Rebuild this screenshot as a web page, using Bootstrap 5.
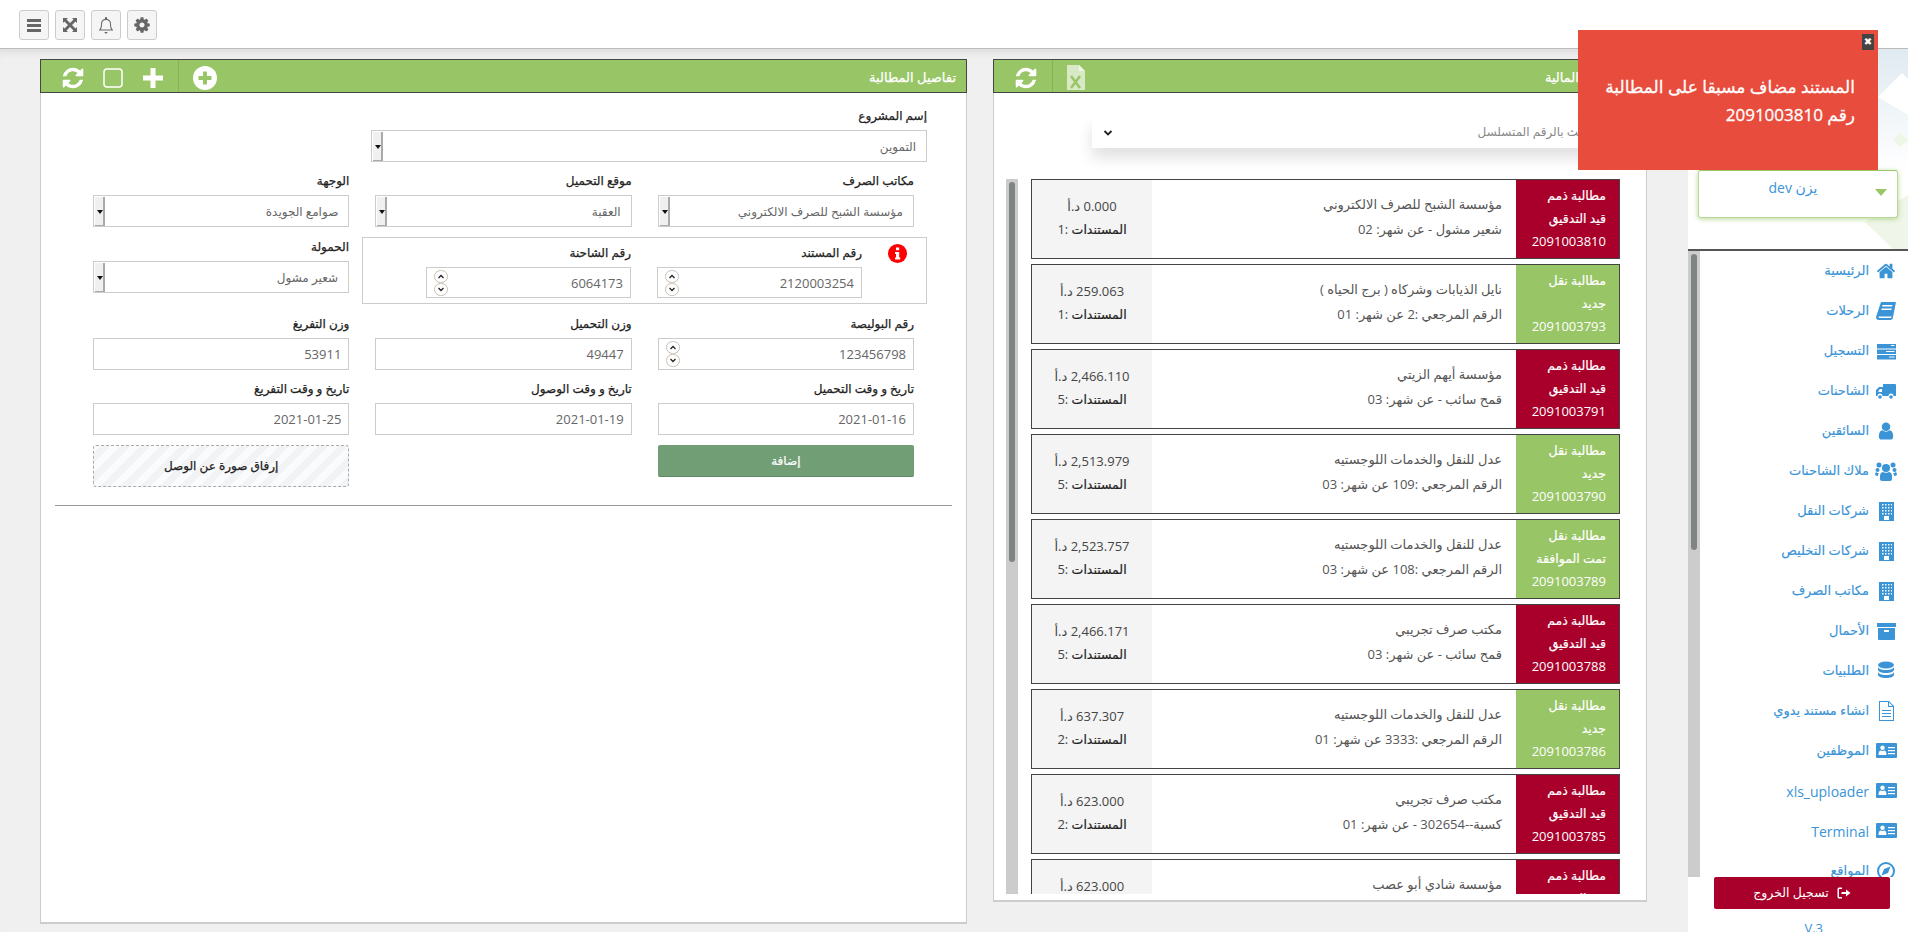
<!DOCTYPE html>
<html lang="ar" dir="rtl">
<head>
    <meta charset="UTF-8">
    <meta name="viewport" content="width=device-width, initial-scale=1.0">
    <title>المطالبات</title>
    <link href="https://cdn.jsdelivr.net/npm/bootstrap@5.3.0/dist/css/bootstrap.min.css" rel="stylesheet">
    <style>
        html, body {
            height: 932px;
            overflow: hidden;
        }
        body {
            background: #fff;
            font-family: "Open Sans", "DejaVu Sans", sans-serif;
            font-size: 13px;
            color: #555;
        }
        /* top bar */
        .top-strip {
            height: 49px;
            margin-right: 12px;
            padding: 10px 19px 0;
            gap: 6px;
            border-bottom: 1px solid #bbb;
        }
        .tool-btn {
            width: 30px;
            height: 30px;
            padding: 0;
            border: 1px solid #ccc;
            border-radius: 3px;
            background: #f5f5f5;
            color: #666;
        }
        .tool-btn svg { width: 18px; height: 18px; fill: currentColor; }
        .shell { height: 883px; }

        /* main area */
        .work-area {
            width: 1688px;
            height: 883px;
            padding: 10px 41px 0 40px;
            gap: 26px;
            background: #f0f0f0;
            box-shadow: inset 0 9px 8px -6px rgba(0, 0, 0, .09);
        }
        .claims-panel {
            width: 654px;
            height: 843px;
            flex: none;
        }
        .detail-panel {
            width: 927px;
            height: 865px;
            flex: none;
        }
        .claims-panel, .detail-panel {
            background: #fff;
            border: solid #ccc;
            border-width: 0 1px 2px;
        }
        .panel-head {
            height: 34px;
            margin: 0 -1px;
            padding: 3px 10px 0 19.500px;
            background: #98c566;
            border: 1px solid #444;
            color: #fff;
            font-size: 13px;
            -webkit-text-stroke: .25px #fff;
        }
        .panel-head svg { fill: #fff; display: block; flex: none; }
        .head-sep { width: 1px; height: 32px; margin-top: -3px; background: #87b256; flex: none; }
        .gap-14 { margin-left: 14px; }
        .gap-15 { margin-left: 15px; }
        .gap-18 { margin-left: 18.500px; }
        .gap-20 { margin-left: 20px; }

        /* detail form */
        .form-body { padding: 14px 52px 0; }
        .form-cols {
            display: grid;
            grid-template-columns: repeat(3, 1fr);
            column-gap: 26px;
            margin-bottom: 10px;
        }
        .field-label {
            display: block;
            height: 23px;
            line-height: 17px;
            margin: 0;
            font-size: 12px;
            color: #222;
            -webkit-text-stroke: .25px #222;
        }
        .field-input {
            width: 100%;
            height: 32px;
            padding: 0 7px;
            border: 1px solid #ccc;
            border-radius: 0;
            background-color: #fff;
            color: #666;
            font-size: 13px;
            text-align: right;
            outline: 0;
        }
        select.field-input {
            appearance: none;
            padding: 2px 10px 0;
            font-size: 12px;
            background-repeat: no-repeat;
            background-position: left 1px top 1px;
            background-image: url("data:image/svg+xml,%3Csvg xmlns='http://www.w3.org/2000/svg' width='10' height='30'%3E%3Crect width='10' height='30' fill='%23f0f0f0'/%3E%3Crect x='8' width='2' height='30' fill='%23aaa'/%3E%3Crect y='28' width='10' height='2' fill='%23aaa'/%3E%3Cpath d='M2 13h6l-3 4z' fill='%23111'/%3E%3C/svg%3E");
        }
        .spin-input {
            background-repeat: no-repeat;
            background-position: left 7px center;
            background-image: url("data:image/svg+xml,%3Csvg xmlns='http://www.w3.org/2000/svg' width='14' height='26'%3E%3Crect x='.5' y='.5' width='13' height='12' rx='6' fill='%23fff' stroke='%23c9bfb2'/%3E%3Crect x='.5' y='13.500' width='13' height='12' rx='6' fill='%23fff' stroke='%23c9bfb2'/%3E%3Cpath d='M4.500 8l2.500-2.500L9.500 8M4.500 18l2.500 2.500L9.500 18' fill='none' stroke='%23222' stroke-width='1.300'/%3E%3C/svg%3E");
        }
        .project-row { width: 556px; margin: 0 -13px 10px 0; }
        .mixed-row { gap: 13px; margin: 0 -13px 11px 0; }
        .doc-box {
            width: 565px;
            height: 67px;
            padding: 6px 19px 0 9px;
            border: 1px solid #ccc;
        }
        .doc-box .doc-col { width: 205px; }
        .doc-box .doc-col + .doc-col { margin-right: 26px; }
        .doc-box .field-input { height: 31px; }
        .alert-dot { width: 19px; height: 19px; margin-left: 26px; flex: none; }
        .weight-col { width: 256px; padding-top: 1px; }
        .add-btn {
            height: 32px;
            padding: 0;
            border: 0;
            border-bottom: 1px solid #5f8b63;
            border-radius: 2px;
            background: #719e74;
            color: #fff;
            font-size: 12px;
            -webkit-text-stroke: .2px #fff;
        }
        .upload-zone {
            height: 42px;
            border: 1px dashed #aaa;
            border-radius: 3px;
            background: repeating-linear-gradient(-45deg, #f2f3f5 0 7px, #fafbfc 7px 14px);
            color: #222;
            font-size: 12px;
            -webkit-text-stroke: .25px #222;
        }
        .form-rule { margin: 18px 14px 0; border-color: #999; opacity: 1; }

        /* claims */
        .search-bar {
            width: 517px;
            height: 32px;
            margin: 23px 37px 0 0;
            box-shadow: 0 10px 15px rgba(0, 0, 0, .12);
            background: #fff;
        }
        .search-bar input {
            border: 0;
            outline: 0;
            flex: 1;
            min-width: 0;
            padding: 0 16px;
            font-size: 12px;
            color: #777;
            background: transparent;
        }
        .search-bar input::placeholder { color: #888; }
        .search-drop { width: 32px; height: 32px; padding: 0; border: 0; background: #fff; }
        .list-wrap { height: 715px; margin-top: 31px; overflow: hidden; }
        .list-track {
            width: 12px;
            margin: 0 13px 0 0;
            padding: 3px;
            background: #ccc;
            flex: none;
        }
        .list-thumb { height: 380px; background: #808484; border-radius: 3px; }
        .claim-stack { width: 589px; margin-right: 26px; flex: none; }
        .claim-row {
            height: 80px;
            margin-bottom: 5px;
            border: 1px solid #444;
        }
        .claim-state {
            width: 103px;
            padding: 4px 13px 0 0;
            color: #fff;
            font-size: 12.500px;
            line-height: 23px;
            flex: none;
        }
        .claim-state b { display: block; font-weight: 400; -webkit-text-stroke: .2px #fff; }
        .claim-state span { display: block; font-size: 13px; }
        .state-red { background: #a8002a; }
        .state-green { background: #98c566; }
        .claim-info {
            flex: 1;
            padding: 12px 14px 0 0;
            color: #555;
            line-height: 25px;
        }
        .claim-money {
            width: 120px;
            padding-top: 15px;
            background: #f4f4f4;
            color: #444;
            text-align: center;
            line-height: 23px;
            flex: none;
        }
        .claim-money b { font-weight: 400; font-size: 12.500px; color: #222; -webkit-text-stroke: .2px #222; }

        /* sidebar */
        .side-col { width: 232px; flex: none; background: #fff; }
        .side-top {
            height: 202px;
            width: 220px;
            margin-right: 12px;
            padding: 121px 10px 0;
            border-bottom: 2px solid #555;
            flex: none;
            background:
                url("data:image/svg+xml,%3Csvg xmlns='http://www.w3.org/2000/svg' width='220' height='200'%3E%3Cpath d='M190 48l24-24 6 6v36z' fill='%23fff'/%3E%3Cpath d='M212 84l8 7-8 7-7-7z' fill='%23eef6e6'/%3E%3Cpath d='M177 173l43-27v54h-15z' fill='%23eff6e9'/%3E%3Cpath d='M178 200l9-9 9 9z' fill='%23fff'/%3E%3C/svg%3E") no-repeat,
                linear-gradient(#dfeaf1, #fff 60%);
        }
        .user-box {
            height: 48px;
            padding: 6px 10px 0 0;
            background: #fff;
            border: 1px solid #b9d99a;
            border-top-color: #98c566;
            border-radius: 3px;
            box-shadow: 0 1px 5px rgba(152, 197, 102, .7);
            color: #3a94d6;
            font-size: 14px;
            text-align: center;
        }
        .user-caret {
            position: absolute;
            top: 18px;
            right: 10px;
            border: 6px solid transparent;
            border-top: 7px solid #98c566;
            border-bottom: 0;
        }
        .side-list { height: 626px; flex: none; overflow: hidden; }
        .side-track {
            width: 12px;
            padding: 3px;
            background: #ccc;
            flex: none;
            order: 2;
        }
        .side-thumb { width: 6px; height: 296px; background: #808484; border-radius: 3px; }
        .side-menu { flex: 1; padding: 0 23px 0 0; }
        .side-link {
            height: 40px;
            padding: 0;
            gap: 6px;
            color: #3a94d6;
            font-size: 13px;
            flex: none;
            -webkit-text-stroke: .15px #3a94d6;
        }
        .side-link svg { width: 22px; height: 20px; fill: #3a94d6; flex: none; }
        .latin-name { font-size: 14px; -webkit-text-stroke: 0; }
        .side-foot { text-align: right; }
        .logout-btn {
            width: 176px;
            height: 32px;
            padding: 0;
            border: 0;
            border-radius: 2px;
            background: #a8002a;
            color: #fff;
            font-size: 12.500px;
            margin-right: 30px;
        }
        .version-tag { margin: 10px 97px 0 0; color: #3a94d6; font-size: 13px; }

        /* toast */
        .error-toast {
            position: fixed;
            top: 30px;
            left: 1578px;
            width: 300px;
            height: 140px;
            padding: 43px 23px 0 10px;
            background: #e74c3c;
            color: #fff;
            font-size: 17px;
            line-height: 28px;
            -webkit-text-stroke: .3px #fff;
            z-index: 10;
        }
        .toast-close {
            position: absolute;
            top: 4px;
            right: 4px;
            width: 12px;
            height: 16px;
            background: #444;
            color: #fff;
            font-size: 10px;
            line-height: 15px;
            text-align: center;
            -webkit-text-stroke: 0;
        }
    </style>
</head>
<body>
    <svg width="0" height="0" class="position-absolute">
        <symbol id="ic-refresh" viewBox="0 0 1792 1792"><path d="M1639 1056q0 5-1 7-64 268-268 434.500t-478 166.500q-146 0-282.500-55t-243.500-157l-129 129q-19 19-45 19t-45-19-19-45v-448q0-26 19-45t45-19h448q26 0 45 19t19 45-19 45l-137 137q71 66 161 102t187 36q134 0 250-65t186-179q11-17 53-117 8-23 30-23h192q13 0 22.500 9.500t9.500 22.500zm25-800v448q0 26-19 45t-45 19h-448q-26 0-45-19t-19-45 19-45l138-138q-148-137-349-137-134 0-250 65t-186 179q-11 17-53 117-8 23-30 23h-199q-13 0-22.500-9.500t-9.500-22.500v-7q65-268 270-434.500t480-166.500q146 0 284 55.500t245 156.500l130-129q19-19 45-19t45 19 19 45z"/></symbol>
        <symbol id="ic-home" viewBox="0 0 1792 1792"><path d="M1472 992v480q0 26-19 45t-45 19h-384v-384h-256v384h-384q-26 0-45-19t-19-45v-480q0-1 .5-3t.5-3l575-474 575 474q1 2 1 6zm223-69l-62 74q-8 9-21 11h-3q-13 0-21-7l-692-577-692 577q-12 8-24 7-13-2-21-11l-62-74q-8-10-7-23.500t11-21.500l719-599q32-26 76-26t76 26l244 204v-195q0-14 9-23t23-9h192q14 0 23 9t9 23v408l219 182q10 8 11 21.500t-7 23.500z"/></symbol>
        <symbol id="ic-user" viewBox="0 0 1792 1792"><path d="M1536 1399q0 109-62.500 187t-150.500 78h-854q-88 0-150.500-78t-62.500-187q0-85 8.500-160.500t31.500-152 58.500-131 94-89 134.500-34.500q131 128 313 128t313-128q76 0 134.500 34.500t94 89 58.500 131 31.500 152 8.500 160.500zm-256-887q0 159-112.500 271.500t-271.500 112.500-271.500-112.500-112.500-271.500 112.500-271.500 271.500-112.500 271.500 112.500 112.500 271.500z"/></symbol>
        <symbol id="ic-book" viewBox="0 0 22 20"><path d="M6 1h15l-3 15a3 3 0 0 1-3 3H4a3 3 0 0 1-3-3zm1.500 3l-.4 1.500h10l.4-1.500zm-.8 3.500l-.4 1.500h10l.4-1.500zM3.500 15.500c0 1 .6 1.500 1.500 1.500h10.500c.8 0 1-.6 1.200-1.500z"/></symbol>
        <symbol id="ic-tasks" viewBox="0 0 22 20" fill-rule="evenodd"><path d="M2 3h19v4.500H2zm14 1v1h3.500V4zM2 8.500h19V13H2zM11 10v1h8.500v-1zM2 14h19v4.500H2zm12 1.500v1h5.500v-1z"/></symbol>
        <symbol id="ic-truck" viewBox="0 0 22 20"><path d="M8 3h12a1 1 0 0 1 1 1v11h-2.500a2.500 2.500 0 0 0-5 0H7.500a2.500 2.500 0 0 0-5 0H1V9l3-3h4zM3.500 9.500v1.500H7V8H5z"/><circle cx="5" cy="16" r="1.800"/><circle cx="16" cy="16" r="1.800"/></symbol>
        <symbol id="ic-users" viewBox="0 0 22 20"><circle cx="11" cy="7" r="4"/><circle cx="4" cy="4" r="2.500"/><circle cx="18" cy="4" r="2.500"/><circle cx="2.500" cy="9" r="2"/><circle cx="19.500" cy="9" r="2"/><path d="M5 15c0-3 2-4 3-4 1 1 5 1 6 0 1 0 3 1 3 4v3a2 2 0 0 1-2 2H7a2 2 0 0 1-2-2zM1 11c1 1 2 1 3 1-1 1-1 2-1 3-2 0-3-1-3-2zm20 0c-1 1-2 1-3 1 1 1 1 2 1 3 2 0 3-1 3-2z"/></symbol>
        <symbol id="ic-office" viewBox="0 0 22 20" fill-rule="evenodd"><path d="M4 1h15v19H4zM7 3v1.500h1.500V3zm3 0v1.500h1.500V3zm3 0v1.500h1.500V3zm3 0v1.500h1V3zM7 6v1.500h1.500V6zm3 0v1.500h1.500V6zm3 0v1.500h1.500V6zm3 0v1.500h1V6zM7 9v1.500h1.500V9zm3 0v1.500h1.500V9zm3 0v1.500h1.500V9zm3 0v1.500h1V9zM7 12v1.500h1.500V12zm3 0v1.500h1.500V12zm3 0v1.500h1.500V12zm3 0v1.500h1V12zM9 15v4h5v-4z"/></symbol>
        <symbol id="ic-archive" viewBox="0 0 22 20" fill-rule="evenodd"><path d="M2 2h19v4H2zM3 7h17v11a1 1 0 0 1-1 1H4a1 1 0 0 1-1-1zm6 2v2h5V9z"/></symbol>
        <symbol id="ic-db" viewBox="0 0 22 20"><ellipse cx="11" cy="4" rx="8" ry="3.500"/><path d="M3 6c1 2 3 3 8 3s7-1 8-3v3c-1 2-3 3-8 3S4 11 3 9zm0 5c1 2 3 3 8 3s7-1 8-3v3c-1 2-3 3-8 3s-7-1-8-3z"/></symbol>
        <symbol id="ic-file" viewBox="0 0 22 20" fill-rule="evenodd"><path d="M4 0h10l5 5v15H4zm1 1v18h13V6h-5V1zm9 .500V5h3.500zM7 9h9v1H7zm0 3h9v1H7zm0 3h9v1H7z"/></symbol>
        <symbol id="ic-card" viewBox="0 0 22 20" fill-rule="evenodd"><path d="M2 2h19a1 1 0 0 1 1 1v13a1 1 0 0 1-1 1H2a1 1 0 0 1-1-1V3a1 1 0 0 1 1-1zm5.500 2.500a2.200 2.200 0 1 0 0 4.400 2.200 2.200 0 0 0 0-4.400zM3.500 14h8c0-3-1-4.500-2-4.500-1 .6-3 .6-4 0-1 0-2 1.500-2 4.500zM13 6v1.300h7V6zm0 3v1.300h7V9zm0 3v1.300h7V12z"/></symbol>
        <symbol id="ic-compass" viewBox="0 0 22 20" fill-rule="evenodd"><path d="M11 1a9 9 0 1 1 0 18 9 9 0 0 1 0-18zm0 2a7 7 0 1 0 0 14 7 7 0 0 0 0-14zm4.500 2.500L13 12l-6.500 2.500L9 8z"/></symbol>
    </svg>

    <!-- الشريط العلوي -->
    <div class="top-strip d-flex" dir="ltr">
        <button class="tool-btn d-flex align-items-center justify-content-center" type="button">
            <svg viewBox="0 0 18 18"><path d="M2 3h14v3H2zm0 5h14v3H2zm0 5h14v3H2z"/></svg>
        </button>
        <button class="tool-btn d-flex align-items-center justify-content-center" type="button">
            <svg viewBox="0 0 18 18"><path d="M2 2h5L5.500 3.500 9 7l3.500-3.500L11 2h5v5l-1.500-1.500L11 9l3.500 3.500L16 11v5h-5l1.500-1.500L9 11l-3.500 3.500L7 16H2v-5l1.500 1.500L7 9 3.500 5.500 2 7z"/></svg>
        </button>
        <button class="tool-btn d-flex align-items-center justify-content-center" type="button">
            <svg viewBox="0 0 18 18"><path d="M9 1c.6 0 1 .4 1 1v.8c2.600.5 4 2.500 4 5.200 0 3 .6 4.500 2 6v.5H2V14c1.400-1.500 2-3 2-6 0-2.700 1.400-4.700 4-5.200V2c0-.6.4-1 1-1zm0 3C6.500 4 5 5.600 5 8c0 2.500-.4 4.200-1.300 5.500h10.600C13.400 12.200 13 10.500 13 8c0-2.400-1.500-4-4-4zM7.500 16h3a1.500 1.500 0 0 1-3 0z"/></svg>
        </button>
        <button class="tool-btn d-flex align-items-center justify-content-center" type="button">
            <svg viewBox="0 0 1792 1792"><path d="M1152 896q0-106-75-181t-181-75-181 75-75 181 75 181 181 75 181-75 75-181zm512-109v222q0 12-8 23t-20 13l-185 28q-19 54-39 91 35 50 107 138 10 12 10 25t-9 23q-27 37-99 108t-94 71q-12 0-26-9l-138-108q-44 23-91 38-16 136-29 186-7 28-36 28h-222q-14 0-24.500-8.500t-11.500-21.500l-28-184q-49-16-90-37l-141 107q-10 9-25 9-14 0-25-11-126-114-165-168-7-10-7-23 0-12 8-23 15-21 51-66.500t54-70.500q-27-50-41-99l-183-27q-13-2-21-12.500t-8-23.500v-222q0-12 8-23t19-13l186-28q14-46 39-92-40-57-107-138-10-12-10-24 0-10 9-23 26-36 98.500-107.500t94.500-71.500q13 0 26 10l138 107q44-23 91-38 16-136 29-186 7-28 36-28h222q14 0 24.500 8.500t11.500 21.500l28 184q49 16 90 37l142-107q9-9 24-9 13 0 25 10 129 119 165 170 7 8 7 22 0 12-8 23-15 21-51 66.500t-54 70.500q26 50 41 98l183 28q13 2 21 12.500t8 23.500z"/></svg>
        </button>
    </div>

    <div class="shell d-flex">
        <!-- القائمة الجانبية -->
        <aside class="side-col d-flex flex-column">
            <div class="side-top">
                <div class="user-box position-relative">يزن dev<span class="user-caret"></span></div>
            </div>
            <div class="side-list d-flex">
                <nav class="side-menu nav flex-column flex-nowrap">
                    <a class="side-link nav-link d-flex align-items-center" href="#"><svg><use href="#ic-home"/></svg>الرئيسية</a>
                    <a class="side-link nav-link d-flex align-items-center" href="#"><svg><use href="#ic-book"/></svg>الرحلات</a>
                    <a class="side-link nav-link d-flex align-items-center" href="#"><svg><use href="#ic-tasks"/></svg>التسجيل</a>
                    <a class="side-link nav-link d-flex align-items-center" href="#"><svg><use href="#ic-truck"/></svg>الشاحنات</a>
                    <a class="side-link nav-link d-flex align-items-center" href="#"><svg><use href="#ic-user"/></svg>السائقين</a>
                    <a class="side-link nav-link d-flex align-items-center" href="#"><svg><use href="#ic-users"/></svg>ملاك الشاحنات</a>
                    <a class="side-link nav-link d-flex align-items-center" href="#"><svg><use href="#ic-office"/></svg>شركات النقل</a>
                    <a class="side-link nav-link d-flex align-items-center" href="#"><svg><use href="#ic-office"/></svg>شركات التخليص</a>
                    <a class="side-link nav-link d-flex align-items-center" href="#"><svg><use href="#ic-office"/></svg>مكاتب الصرف</a>
                    <a class="side-link nav-link d-flex align-items-center" href="#"><svg><use href="#ic-archive"/></svg>الأحمال</a>
                    <a class="side-link nav-link d-flex align-items-center" href="#"><svg><use href="#ic-db"/></svg>الطلبيات</a>
                    <a class="side-link nav-link d-flex align-items-center" href="#"><svg><use href="#ic-file"/></svg>انشاء مستند يدوي</a>
                    <a class="side-link nav-link d-flex align-items-center" href="#"><svg><use href="#ic-card"/></svg>الموظفين</a>
                    <a class="side-link nav-link d-flex align-items-center" href="#"><svg><use href="#ic-card"/></svg><span class="latin-name">xls_uploader</span></a>
                    <a class="side-link nav-link d-flex align-items-center" href="#"><svg><use href="#ic-card"/></svg><span class="latin-name">Terminal</span></a>
                    <a class="side-link nav-link d-flex align-items-center" href="#"><svg><use href="#ic-compass"/></svg>المواقع</a>
                </nav>
                <div class="side-track"><div class="side-thumb"></div></div>
            </div>
            <div class="side-foot">
                <button class="logout-btn d-inline-flex align-items-center justify-content-center gap-2" type="button">
                    <svg width="14" height="14" viewBox="0 0 14 14" fill="#fff"><path d="M5 1.500H2A1.500 1.500 0 0 0 .5 3v8A1.500 1.500 0 0 0 2 12.500h3V11H2V3h3zM9 3.500V6H4.500v2H9v2.500L13.500 7z"/></svg>
                    تسجيل الخروج
                </button>
                <div class="version-tag">V.3</div>
            </div>
        </aside>

        <main class="work-area d-flex">
            <!-- قائمة المطالبات -->
            <section class="claims-panel">
                <div class="panel-head d-flex align-items-center">
                    <span class="flex-grow-1">المطالبات المالية</span>
                    <svg class="gap-14" width="18" height="25" viewBox="0 0 18 25"><path d="M0 0h12l6 6v19H0z" fill="#d8e9c6"/><path d="M12 0l6 6h-6z" fill="#eef6e5"/><path d="M4 11l9 12m0-12l-9 12" stroke="#98c566" stroke-width="2.500" fill="none"/></svg>
                    <span class="head-sep gap-14"></span>
                    <svg width="24" height="24"><use href="#ic-refresh"/></svg>
                </div>
                <div class="search-bar d-flex">
                    <input type="text" placeholder="ابحث بالرقم المتسلسل">
                    <button class="search-drop" type="button">
                        <svg width="10" height="8" viewBox="0 0 10 8"><path d="M1.500 2l3.500 3.500L8.500 2" fill="none" stroke="#222" stroke-width="1.800"/></svg>
                    </button>
                </div>
                <div class="list-wrap d-flex">
                    <div class="claim-stack">
                        <div class="claim-row d-flex">
                            <div class="claim-state state-red"><b>مطالبة ذمم</b><b>قيد التدقيق</b><span>2091003810</span></div>
                            <div class="claim-info"><div>مؤسسة الشبح للصرف الالكتروني</div><div>شعير مشول - عن شهر: 02</div></div>
                            <div class="claim-money"><div>0.000 د.أ</div><div><b>المستندات</b> :1</div></div>
                        </div>
                        <div class="claim-row d-flex">
                            <div class="claim-state state-green"><b>مطالبة نقل</b><b>جديد</b><span>2091003793</span></div>
                            <div class="claim-info"><div>نايل الذيابات وشركاه ( برج الحياه )</div><div>الرقم المرجعي :2 عن شهر: 01</div></div>
                            <div class="claim-money"><div>259.063 د.أ</div><div><b>المستندات</b> :1</div></div>
                        </div>
                        <div class="claim-row d-flex">
                            <div class="claim-state state-red"><b>مطالبة ذمم</b><b>قيد التدقيق</b><span>2091003791</span></div>
                            <div class="claim-info"><div>مؤسسة أيهم الزيتي</div><div>قمح سائب - عن شهر: 03</div></div>
                            <div class="claim-money"><div>2,466.110 د.أ</div><div><b>المستندات</b> :5</div></div>
                        </div>
                        <div class="claim-row d-flex">
                            <div class="claim-state state-green"><b>مطالبة نقل</b><b>جديد</b><span>2091003790</span></div>
                            <div class="claim-info"><div>عدل للنقل والخدمات اللوجستيه</div><div>الرقم المرجعي :109 عن شهر: 03</div></div>
                            <div class="claim-money"><div>2,513.979 د.أ</div><div><b>المستندات</b> :5</div></div>
                        </div>
                        <div class="claim-row d-flex">
                            <div class="claim-state state-green"><b>مطالبة نقل</b><b>تمت الموافقة</b><span>2091003789</span></div>
                            <div class="claim-info"><div>عدل للنقل والخدمات اللوجستيه</div><div>الرقم المرجعي :108 عن شهر: 03</div></div>
                            <div class="claim-money"><div>2,523.757 د.أ</div><div><b>المستندات</b> :5</div></div>
                        </div>
                        <div class="claim-row d-flex">
                            <div class="claim-state state-red"><b>مطالبة ذمم</b><b>قيد التدقيق</b><span>2091003788</span></div>
                            <div class="claim-info"><div>مكتب صرف تجريبي</div><div>قمح سائب - عن شهر: 03</div></div>
                            <div class="claim-money"><div>2,466.171 د.أ</div><div><b>المستندات</b> :5</div></div>
                        </div>
                        <div class="claim-row d-flex">
                            <div class="claim-state state-green"><b>مطالبة نقل</b><b>جديد</b><span>2091003786</span></div>
                            <div class="claim-info"><div>عدل للنقل والخدمات اللوجستيه</div><div>الرقم المرجعي :3333 عن شهر: 01</div></div>
                            <div class="claim-money"><div>637.307 د.أ</div><div><b>المستندات</b> :2</div></div>
                        </div>
                        <div class="claim-row d-flex">
                            <div class="claim-state state-red"><b>مطالبة ذمم</b><b>قيد التدقيق</b><span>2091003785</span></div>
                            <div class="claim-info"><div>مكتب صرف تجريبي</div><div>كسبة--302654 - عن شهر: 01</div></div>
                            <div class="claim-money"><div>623.000 د.أ</div><div><b>المستندات</b> :2</div></div>
                        </div>
                        <div class="claim-row d-flex">
                            <div class="claim-state state-red"><b>مطالبة ذمم</b><b>قيد التدقيق</b><span>2091003784</span></div>
                            <div class="claim-info"><div>مؤسسة شادي أبو عصب</div><div>قمح سائب - عن شهر: 01</div></div>
                            <div class="claim-money"><div>623.000 د.أ</div><div><b>المستندات</b> :2</div></div>
                        </div>
                    </div>
                    <div class="list-track"><div class="list-thumb"></div></div>
                </div>
            </section>

            <!-- تفاصيل المطالبة -->
            <section class="detail-panel">
                <div class="panel-head d-flex align-items-center">
                    <span class="flex-grow-1">تفاصيل المطالبة</span>
                    <svg class="gap-14" width="24" height="24" viewBox="0 0 24 24"><circle cx="12" cy="12" r="12"/><path d="M10 5.500h4V10h4.500v4H14v4.500h-4V14H5.500v-4H10z" fill="#98c566"/></svg>
                    <span class="head-sep gap-15"></span>
                    <svg class="gap-20" width="20" height="20" viewBox="0 0 20 20"><path d="M7.500 0h5v7.500H20v5h-7.500V20h-5v-7.500H0v-5h7.500z"/></svg>
                    <svg class="gap-18" width="20" height="20" viewBox="0 0 20 20"><rect x="1" y="1" width="18" height="18" rx="3" fill="none" stroke="#fff" stroke-width="1.500"/></svg>
                    <svg width="24" height="24"><use href="#ic-refresh"/></svg>
                </div>
                <form class="form-body">
                    <div class="project-row">
                        <label class="field-label">إسم المشروع</label>
                        <select class="field-input"><option>التموين</option></select>
                    </div>
                    <div class="form-cols">
                        <div><label class="field-label">مكاتب الصرف</label><select class="field-input"><option>مؤسسة الشبح للصرف الالكتروني</option></select></div>
                        <div><label class="field-label">موقع التحميل</label><select class="field-input"><option>العقبة</option></select></div>
                        <div><label class="field-label">الوجهة</label><select class="field-input"><option>صوامع الجويدة</option></select></div>
                    </div>
                    <div class="mixed-row d-flex">
                        <div class="doc-box d-flex">
                            <svg class="alert-dot" viewBox="0 0 19 19"><circle cx="9.500" cy="9.500" r="9.500" fill="#f00"/><path d="M8 3.500h3.200v2.800H8zM7 8h4.200v5.500h1v2H7v-2h1V10H7z" fill="#fff"/></svg>
                            <div class="doc-col"><label class="field-label">رقم المستند</label><input class="field-input spin-input" value="2120003254"></div>
                            <div class="doc-col"><label class="field-label">رقم الشاحنة</label><input class="field-input spin-input" value="6064173"></div>
                        </div>
                        <div class="weight-col"><label class="field-label">الحمولة</label><select class="field-input"><option>شعير مشول</option></select></div>
                    </div>
                    <div class="form-cols">
                        <div><label class="field-label">رقم البوليصة</label><input class="field-input spin-input" value="123456798"></div>
                        <div><label class="field-label">وزن التحميل</label><input class="field-input" value="49447"></div>
                        <div><label class="field-label">وزن التفريغ</label><input class="field-input" value="53911"></div>
                    </div>
                    <div class="form-cols">
                        <div><label class="field-label">تاريخ و وقت التحميل</label><input class="field-input" value="2021-01-16"></div>
                        <div><label class="field-label">تاريخ و وقت الوصول</label><input class="field-input" value="2021-01-19"></div>
                        <div><label class="field-label">تاريخ و وقت التفريغ</label><input class="field-input" value="2021-01-25"></div>
                    </div>
                    <div class="form-cols mb-0 align-items-start">
                        <button class="add-btn" type="button">إضافة</button>
                        <div></div>
                        <div class="upload-zone d-flex align-items-center justify-content-center">إرفاق صورة عن الوصل</div>
                    </div>
                </form>
                <hr class="form-rule">
            </section>
        </main>
    </div>

    <div class="error-toast">
        <span class="toast-close">✖</span>
        المستند مضاف مسبقا على المطالبة<br>رقم 2091003810
    </div>

    <script src="https://cdn.jsdelivr.net/npm/bootstrap@5.3.0/dist/js/bootstrap.bundle.min.js"></script>
</body>
</html>
